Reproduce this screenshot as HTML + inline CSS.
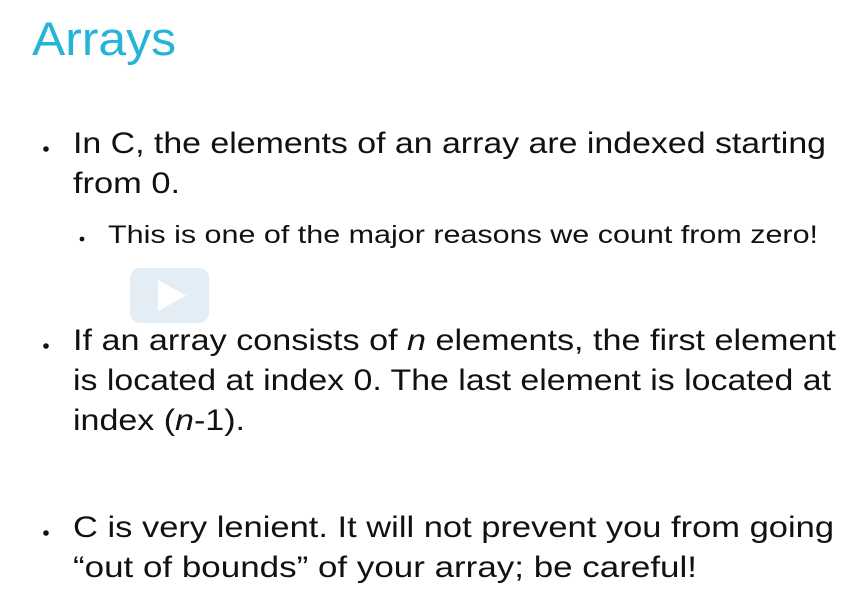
<!DOCTYPE html>
<html><head><style>
html,body{margin:0;padding:0;background:#fff;}
svg{display:block;}
text{font-family:"Liberation Sans",sans-serif;fill:#111;}
</style></head><body>
<svg width="850" height="616" viewBox="0 0 850 616">
<text x="32" y="55" font-size="47" style="fill:#25b3d8" textLength="144" lengthAdjust="spacingAndGlyphs">Arrays</text>
<rect x="130" y="268" width="79" height="55" rx="10" fill="#e2edf5"/>
<path d="M158 280 L158 311 L186 295.5 Z" fill="#fff"/>
<g font-size="30">
<circle cx="46" cy="149" r="2.8" fill="#111"/>
<text x="73" y="153" textLength="753" lengthAdjust="spacingAndGlyphs">In C, the elements of an array are indexed starting</text>
<text x="73" y="193" textLength="107" lengthAdjust="spacingAndGlyphs">from 0.</text>
<circle cx="46" cy="346" r="2.8" fill="#111"/>
<text x="73" y="350" textLength="763" lengthAdjust="spacingAndGlyphs">If an array consists of <tspan font-style="italic">n</tspan> elements, the first element</text>
<text x="73" y="390" textLength="758" lengthAdjust="spacingAndGlyphs">is located at index 0. The last element is located at</text>
<text x="73" y="430" textLength="172" lengthAdjust="spacingAndGlyphs">index (<tspan font-style="italic">n</tspan>-1).</text>
<circle cx="46" cy="533" r="2.8" fill="#111"/>
<text x="73" y="537" textLength="761" lengthAdjust="spacingAndGlyphs">C is very lenient. It will not prevent you from going</text>
<text x="73" y="577" textLength="624" lengthAdjust="spacingAndGlyphs">“out of bounds” of your array; be careful!</text>
</g>
<circle cx="82" cy="239" r="2.4" fill="#111"/>
<text x="108" y="243" font-size="25" textLength="710" lengthAdjust="spacingAndGlyphs">This is one of the major reasons we count from zero!</text>
</svg>
</body></html>
